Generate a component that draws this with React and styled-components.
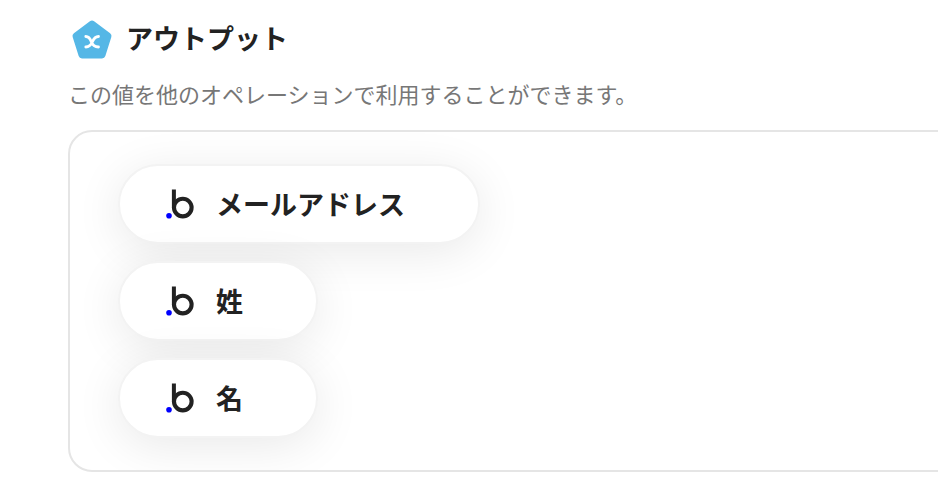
import React from "react";
import styled, { createGlobalStyle } from "styled-components";

const GlobalStyle = createGlobalStyle`
  * {
    box-sizing: border-box;
  }

  body {
    margin: 0;
    background: #fff;
    color: #222;
    font-family: "Noto Sans CJK JP", sans-serif;
    overflow-x: hidden;
  }
`;

const Section = styled.section`
  padding: 16px 0 24px 68px;
`;

const Header = styled.header`
  display: flex;
  align-items: center;
  gap: 10px;
  height: 48px;
`;

const Title = styled.h2`
  margin: 0;
  padding-bottom: 4px;
  font-size: 27px;
  font-weight: 700;
  line-height: 40px;
`;

const Description = styled.p`
  margin: 13px 0 21px;
  color: #777;
  font-size: 22px;
  line-height: 32px;
`;

const OutputList = styled.ul`
  display: flex;
  flex-direction: column;
  align-items: flex-start;
  gap: 17px;
  margin: 0 -32px 0 0;
  padding: 32px 48px;
  border: 2px solid #e5e5e5;
  border-radius: 24px;
  list-style: none;
  overflow: hidden;
`;

const OutputItem = styled.li`
  display: flex;
  align-items: center;
  gap: 20px;
  padding: 18px 73px 18px 46px;
  border: 2px solid #f3f3f3;
  border-radius: 40px;
  background: #fff;
  box-shadow: 0 8px 48px rgba(0, 0, 0, 0.09);
`;

const OutputName = styled.span`
  font-size: 27px;
  font-weight: 700;
  line-height: 40px;
`;

const OutputIcon = () => (
  <svg width="48" height="48" viewBox="0 0 48 48" aria-hidden="true">
    <path
      d="M24 8 L40 20 L34 39 H14 L8 20 Z"
      fill="#55b7e6"
      stroke="#55b7e6"
      strokeWidth="7"
      strokeLinejoin="round"
    />
    <path
      d="M17.8 20.5C21.5 20.5 22.3 23 23.3 25.8S26.5 31 30.5 31M30.5 20.5C26.8 20.5 25.6 23 24.4 25.8S21.5 31 17.8 31"
      fill="none"
      stroke="#fff"
      strokeWidth="2.8"
      strokeLinecap="round"
    />
  </svg>
);

const ServiceLogo = () => (
  <svg width="30" height="32" viewBox="0 0 30 32" aria-hidden="true">
    <path d="M7.9 1.5V20" fill="none" stroke="#222" strokeWidth="4" />
    <circle cx="16.8" cy="19.6" r="8.8" fill="none" stroke="#222" strokeWidth="4.1" />
    <circle cx="3" cy="27.7" r="2.8" fill="#0000ff" />
  </svg>
);

const outputs = ["メールアドレス", "姓", "名"];

const App = () => {
  return (
    <>
      <GlobalStyle />
      <Section>
        <Header>
          <OutputIcon />
          <Title>アウトプット</Title>
        </Header>
        <Description>この値を他のオペレーションで利用することができます。</Description>
        <OutputList>
          {outputs.map((name) => (
            <OutputItem key={name}>
              <ServiceLogo />
              <OutputName>{name}</OutputName>
            </OutputItem>
          ))}
        </OutputList>
      </Section>
    </>
  );
};

export default App;
